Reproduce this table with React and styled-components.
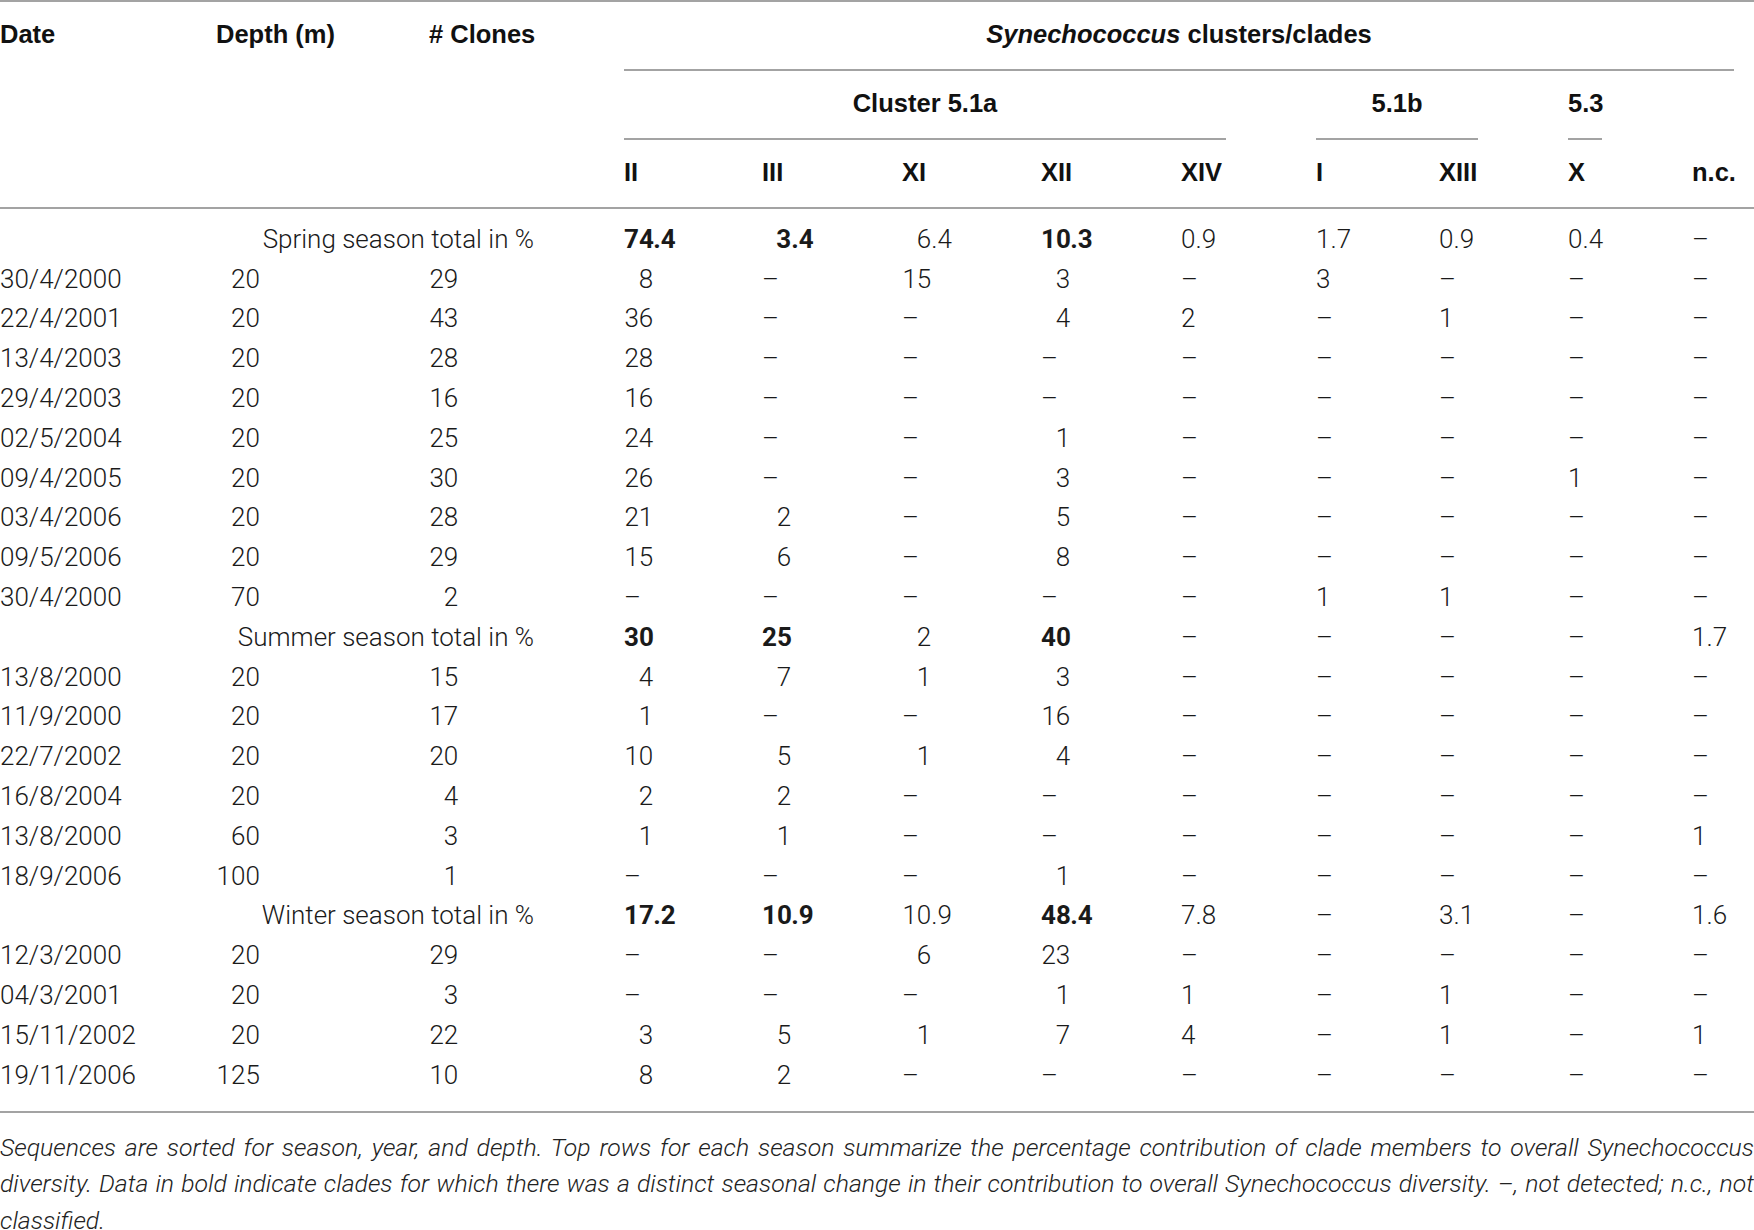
import React from 'react';
import styled, { createGlobalStyle } from 'styled-components';

const GlobalStyle = createGlobalStyle`
  html, body {
    margin: 0;
    padding: 0;
    background: #ffffff;
  }
  body {
    font-family: Roboto, "Liberation Sans", Arial, sans-serif;
    color: #1a1a1a;
  }
`;

const COLUMNS = '126px 123px 105px 48px 50px 49px 50px 45px 33px 39px 34px 42px';
const RULE = '#a3a3a3';

const Page = styled.div`
  width: 1754px;
  overflow: hidden;
`;

const Table = styled.div`
  border-top: 2px solid ${RULE};
`;

const Head = styled.div`
  display: grid;
  grid-template-columns: ${COLUMNS};
  column-gap: 90px;
  border-bottom: 2px solid ${RULE};
`;

const HeadCell = styled.div`
  grid-column: ${(p) => p.$col};
  grid-row: ${(p) => p.$row};
  padding: 16px 0 19px;
  line-height: 32px;
  font-family: "Liberation Sans", Arial, sans-serif;
  font-size: 25.5px;
  font-weight: 700;
  color: #111;
  white-space: nowrap;
  text-align: ${(p) => (p.$center ? 'center' : 'left')};
  border-bottom: ${(p) => (p.$rule ? `2px solid ${RULE}` : 'none')};

  em {
    font-style: italic;
  }
`;

const Body = styled.div`
  padding: 10px 0 16px;
  border-bottom: 2px solid ${RULE};
`;

const Row = styled.div`
  display: grid;
  grid-template-columns: ${COLUMNS};
  column-gap: 90px;
  height: 39.8px;
  align-items: center;
  font-size: 26px;
  font-weight: 300;
  white-space: nowrap;
`;

const Cell = styled.div`
  grid-column: ${(p) => p.$col || 'auto'};
  text-align: ${(p) => p.$align || 'left'};
  font-weight: ${(p) => (p.$bold ? 700 : 300)};
`;

const IntPart = styled.span`
  display: inline-block;
  width: ${(p) => p.$digits * 0.562}em;
  text-align: right;
`;

const Footnote = styled.div`
  padding-top: 17px;
  font-size: 24.8px;
  font-weight: 300;
  font-style: italic;
  line-height: 36.5px;
  color: #222;
`;

const FootLine = styled.span`
  display: block;
  white-space: nowrap;
  text-align: ${(p) => (p.$justify ? 'justify' : 'left')};
  text-align-last: ${(p) => (p.$justify ? 'justify' : 'left')};
`;

const D = '–';

const rows = [
  { label: 'Spring season total in %', v: ['*74.4', '*3.4', '6.4', '*10.3', '0.9', '1.7', '0.9', '0.4', D] },
  { date: '30/4/2000', depth: '20', clones: '29', v: ['8', D, '15', '3', D, '3', D, D, D] },
  { date: '22/4/2001', depth: '20', clones: '43', v: ['36', D, D, '4', '2', D, '1', D, D] },
  { date: '13/4/2003', depth: '20', clones: '28', v: ['28', D, D, D, D, D, D, D, D] },
  { date: '29/4/2003', depth: '20', clones: '16', v: ['16', D, D, D, D, D, D, D, D] },
  { date: '02/5/2004', depth: '20', clones: '25', v: ['24', D, D, '1', D, D, D, D, D] },
  { date: '09/4/2005', depth: '20', clones: '30', v: ['26', D, D, '3', D, D, D, '1', D] },
  { date: '03/4/2006', depth: '20', clones: '28', v: ['21', '2', D, '5', D, D, D, D, D] },
  { date: '09/5/2006', depth: '20', clones: '29', v: ['15', '6', D, '8', D, D, D, D, D] },
  { date: '30/4/2000', depth: '70', clones: '2', v: [D, D, D, D, D, '1', '1', D, D] },
  { label: 'Summer season total in %', v: ['*30', '*25', '2', '*40', D, D, D, D, '1.7'] },
  { date: '13/8/2000', depth: '20', clones: '15', v: ['4', '7', '1', '3', D, D, D, D, D] },
  { date: '11/9/2000', depth: '20', clones: '17', v: ['1', D, D, '16', D, D, D, D, D] },
  { date: '22/7/2002', depth: '20', clones: '20', v: ['10', '5', '1', '4', D, D, D, D, D] },
  { date: '16/8/2004', depth: '20', clones: '4', v: ['2', '2', D, D, D, D, D, D, D] },
  { date: '13/8/2000', depth: '60', clones: '3', v: ['1', '1', D, D, D, D, D, D, '1'] },
  { date: '18/9/2006', depth: '100', clones: '1', v: [D, D, D, '1', D, D, D, D, D] },
  { label: 'Winter season total in %', v: ['*17.2', '*10.9', '10.9', '*48.4', '7.8', D, '3.1', D, '1.6'] },
  { date: '12/3/2000', depth: '20', clones: '29', v: [D, D, '6', '23', D, D, D, D, D] },
  { date: '04/3/2001', depth: '20', clones: '3', v: [D, D, D, '1', '1', D, '1', D, D] },
  { date: '15/11/2002', depth: '20', clones: '22', v: ['3', '5', '1', '7', '4', D, '1', D, '1'] },
  { date: '19/11/2006', depth: '125', clones: '10', v: ['8', '2', D, D, D, D, D, D, D] },
];

const clades = ['II', 'III', 'XI', 'XII', 'XIV', 'I', 'XIII', 'X', 'n.c.'];

// the first four clade columns line up on the decimal point
function Value({ raw, aligned }) {
  const bold = raw.startsWith('*');
  const text = bold ? raw.slice(1) : raw;
  if (text === D || !aligned) return <Cell $bold={bold}>{text}</Cell>;
  const [whole, frac] = text.split('.');
  return (
    <Cell $bold={bold}>
      <IntPart $digits={2}>{whole}</IntPart>
      {frac !== undefined && `.${frac}`}
    </Cell>
  );
}

function DataRow({ row }) {
  return (
    <Row>
      {row.label ? (
        <Cell $col="1 / 4" $align="right">{row.label}</Cell>
      ) : (
        <>
          <Cell>{row.date}</Cell>
          <Cell><IntPart $digits={3}>{row.depth}</IntPart></Cell>
          <Cell><IntPart $digits={2}>{row.clones}</IntPart></Cell>
        </>
      )}
      {row.v.map((raw, i) => (
        <Value key={i} raw={raw} aligned={i < 4} />
      ))}
    </Row>
  );
}

export default function App() {
  return (
    <Page>
      <GlobalStyle />
      <Table>
        <Head>
          <HeadCell $col="1" $row="1">Date</HeadCell>
          <HeadCell $col="2" $row="1">Depth (m)</HeadCell>
          <HeadCell $col="3" $row="1"># Clones</HeadCell>
          <HeadCell $col="4 / 13" $row="1" $center $rule>
            <em>Synechococcus</em> clusters/clades
          </HeadCell>
          <HeadCell $col="4 / 9" $row="2" $center $rule>Cluster 5.1a</HeadCell>
          <HeadCell $col="9 / 11" $row="2" $center $rule>5.1b</HeadCell>
          <HeadCell $col="11 / 12" $row="2" $center $rule>5.3</HeadCell>
          {clades.map((c, i) => (
            <HeadCell key={c} $col={`${i + 4}`} $row="3">{c}</HeadCell>
          ))}
        </Head>
        <Body>
          {rows.map((row, i) => (
            <DataRow key={i} row={row} />
          ))}
        </Body>
      </Table>
      <Footnote>
        <FootLine $justify>
          Sequences are sorted for season, year, and depth. Top rows for each season summarize the percentage contribution of clade members to overall Synechococcus
        </FootLine>
        <FootLine $justify>
          diversity. Data in bold indicate clades for which there was a distinct seasonal change in their contribution to overall Synechococcus diversity. –, not detected; n.c., not
        </FootLine>
        <FootLine>classified.</FootLine>
      </Footnote>
    </Page>
  );
}
